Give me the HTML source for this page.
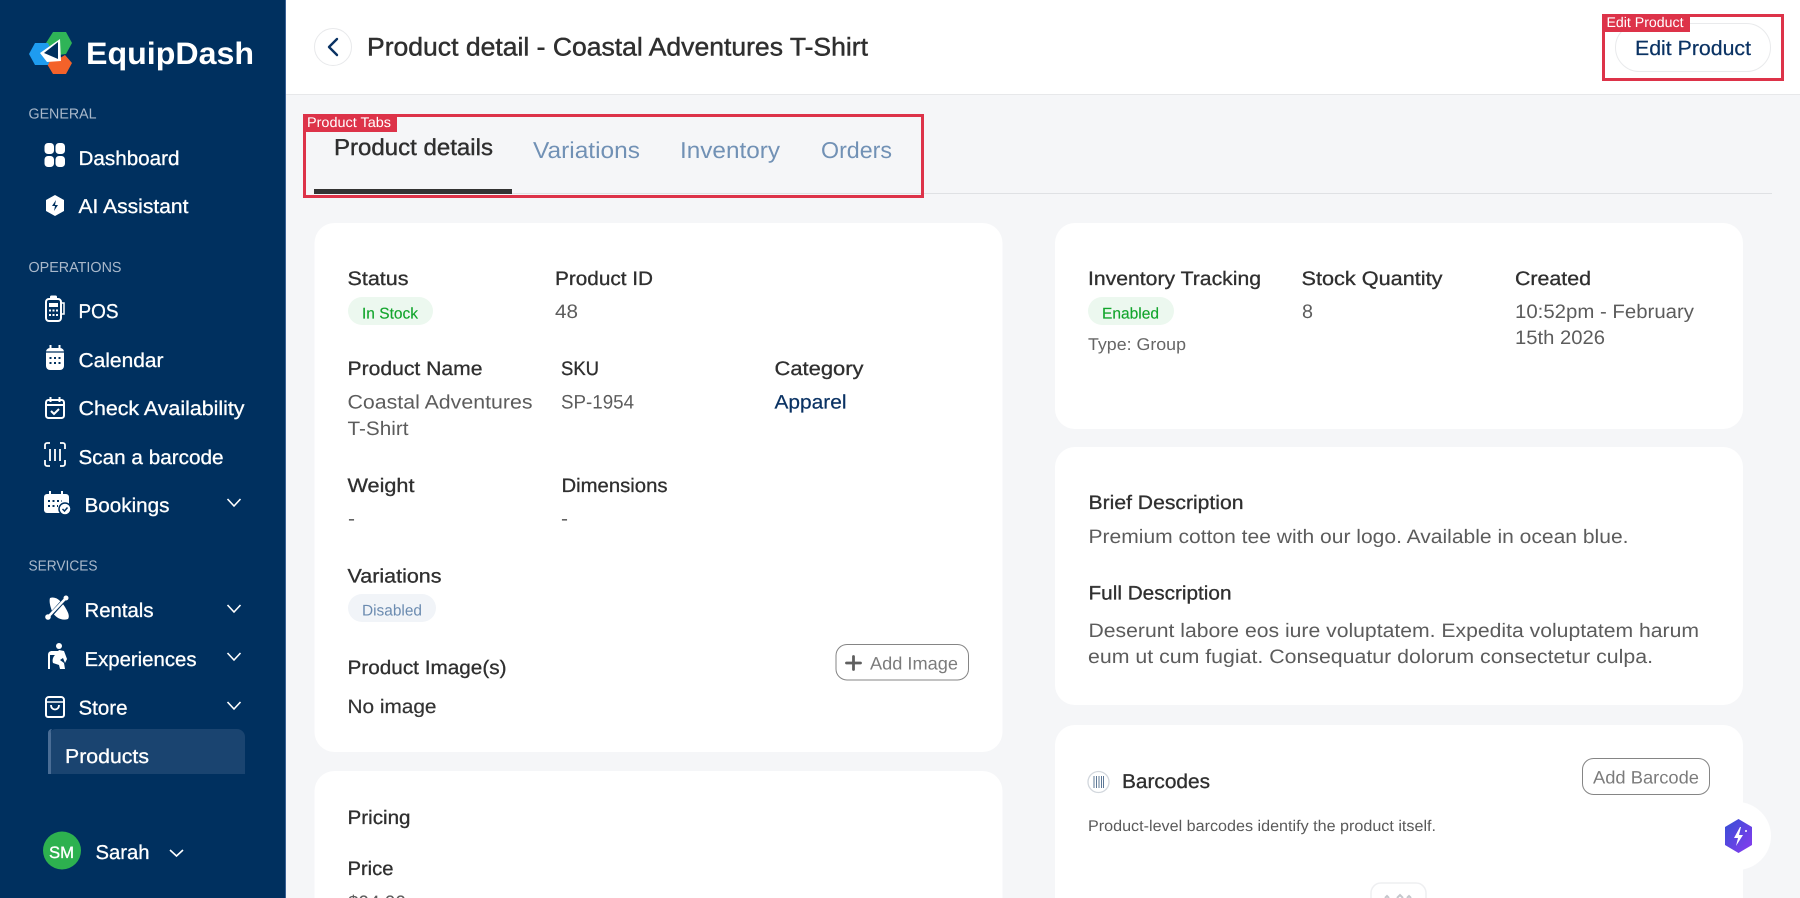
<!DOCTYPE html>
<html lang="en"><head><meta charset="utf-8"><title>Product detail - Coastal Adventures T-Shirt</title>
<style>
html,body{margin:0;padding:0;width:1800px;height:898px;overflow:hidden;background:#f5f6f8}
svg{display:block;position:absolute;left:0;top:0}
text{font-family:"Liberation Sans",Arial,sans-serif;text-rendering:geometricPrecision;white-space:pre}
.nav{font-size:20px;fill:#fff;stroke:#fff;stroke-width:.3}
.sec{font-size:14.5px;fill:#a9b8ca}
.lb{font-size:19.5px;fill:#2f2f2f;stroke:#2f2f2f;stroke-width:.3}
.v{font-size:19.5px;fill:#5c5c5c}
.tab{font-size:23px;fill:#7191b5}
.red{font-size:14px;fill:#fff}
</style></head><body>
<svg width="1800" height="898" viewBox="0 0 1800 898" xmlns="http://www.w3.org/2000/svg">
<defs><linearGradient id="g" x1="0" y1="0" x2="1" y2="1"><stop offset="0" stop-color="#3450d4"/><stop offset="1" stop-color="#8a3af0"/></linearGradient><clipPath id="frame"><rect width="1800" height="898"/></clipPath></defs>
<g clip-path="url(#frame)">
<rect width="1800" height="898" fill="#f5f6f8"/>
<!-- header -->
<rect x="285" y="0" width="1515" height="94" fill="#fff"/>
<rect x="285" y="94" width="1515" height="1" fill="#e7e8ea"/>
<circle cx="333" cy="47" r="18.5" fill="#fff" stroke="#e8e9eb"/>
<path d="M337 39l-8 8 8 8" fill="none" stroke="#0a3263" stroke-width="2.400" stroke-linecap="round" stroke-linejoin="round"/>
<text x="367" y="55.5" font-size="25.5" fill="#2f2f2f" stroke="#2f2f2f" stroke-width=".45" textLength="501" lengthAdjust="spacingAndGlyphs">Product detail - Coastal Adventures T-Shirt</text>
<!-- edit product -->
<rect x="1615.5" y="23.5" width="155" height="48" rx="24" fill="#fff" stroke="#e9eaec"/>
<text x="1635" y="55" font-size="20.5" fill="#0a3263" stroke="#0a3263" stroke-width=".2" textLength="116" lengthAdjust="spacingAndGlyphs">Edit Product</text>
<rect x="1603.5" y="15.5" width="179" height="64" fill="none" stroke="#dd3349" stroke-width="3"/>
<rect x="1602" y="14" width="88" height="18" fill="#dd3349"/>
<text class="red" x="1606.500" y="27" textLength="77" lengthAdjust="spacingAndGlyphs">Edit Product</text>
<!-- tabs -->
<rect x="924" y="193" width="848" height="1" fill="#dfe1e4"/>
<rect x="314" y="193" width="610" height="1" fill="#dfe1e4"/>
<text x="334" y="155" font-size="23" fill="#2f2f2f" stroke="#2f2f2f" stroke-width=".4" textLength="159" lengthAdjust="spacingAndGlyphs">Product details</text>
<text class="tab" x="533" y="158" textLength="107" lengthAdjust="spacingAndGlyphs">Variations</text>
<text class="tab" x="680" y="158" textLength="100" lengthAdjust="spacingAndGlyphs">Inventory</text>
<text class="tab" x="821" y="158" textLength="71" lengthAdjust="spacingAndGlyphs">Orders</text>
<rect x="314" y="189" width="198" height="5" fill="#333"/>
<rect x="304.5" y="115.5" width="618" height="81" fill="none" stroke="#dd3349" stroke-width="3"/>
<rect x="303" y="114" width="94" height="18" fill="#dd3349"/>
<text class="red" x="307" y="127" textLength="84" lengthAdjust="spacingAndGlyphs">Product Tabs</text>
<!-- left card 1 -->
<rect x="314.5" y="223" width="688" height="529" rx="20" fill="#fff"/>
<text class="lb" x="347.500" y="285" textLength="61" lengthAdjust="spacingAndGlyphs">Status</text>
<text class="lb" x="555" y="285" textLength="98" lengthAdjust="spacingAndGlyphs">Product ID</text>
<rect x="348" y="297" width="85" height="28" rx="14" fill="#ecf8ef"/>
<text x="362" y="318.5" font-size="15.5" fill="#12a52c" stroke="#12a52c" stroke-width=".15" textLength="56" lengthAdjust="spacingAndGlyphs">In Stock</text>
<text class="v" x="555" y="318" textLength="23" lengthAdjust="spacingAndGlyphs">48</text>
<text class="lb" x="347.500" y="375" textLength="135" lengthAdjust="spacingAndGlyphs">Product Name</text>
<text class="lb" x="561" y="375" textLength="38" lengthAdjust="spacingAndGlyphs">SKU</text>
<text class="lb" x="774.500" y="375" textLength="89" lengthAdjust="spacingAndGlyphs">Category</text>
<text class="v" x="347.500" y="408.500" textLength="185" lengthAdjust="spacingAndGlyphs">Coastal Adventures</text>
<text class="v" x="347.500" y="435" textLength="61" lengthAdjust="spacingAndGlyphs">T-Shirt</text>
<text class="v" x="561" y="408.500" textLength="73" lengthAdjust="spacingAndGlyphs">SP-1954</text>
<text x="774.500" y="408.500" font-size="19.5" fill="#0a3263" stroke="#0a3263" stroke-width=".2" textLength="72" lengthAdjust="spacingAndGlyphs">Apparel</text>
<text class="lb" x="347.500" y="492" textLength="67" lengthAdjust="spacingAndGlyphs">Weight</text>
<text class="lb" x="561.500" y="492" textLength="106" lengthAdjust="spacingAndGlyphs">Dimensions</text>
<text class="v" x="348" y="525" textLength="7" lengthAdjust="spacingAndGlyphs">-</text>
<text class="v" x="561" y="525" textLength="7" lengthAdjust="spacingAndGlyphs">-</text>
<text class="lb" x="347.500" y="582.500" textLength="94" lengthAdjust="spacingAndGlyphs">Variations</text>
<rect x="348" y="594" width="88" height="28" rx="14" fill="#f1f4f8"/>
<text x="362" y="615.5" font-size="15.5" fill="#6b8bb0" textLength="60" lengthAdjust="spacingAndGlyphs">Disabled</text>
<text class="lb" x="347.500" y="674" textLength="159" lengthAdjust="spacingAndGlyphs">Product Image(s)</text>
<rect x="836" y="644.500" width="132.500" height="35.500" rx="11" fill="#fff" stroke="#858585"/>
<path d="M853.500 656.500v13M846.500 663h14" stroke="#5f5f5f" stroke-width="2.800" stroke-linecap="round"/>
<text x="870" y="669.500" font-size="18" fill="#7b7b7b" textLength="88" lengthAdjust="spacingAndGlyphs">Add Image</text>
<text x="347.500" y="713" font-size="19.5" fill="#333" stroke="#333" stroke-width=".2" textLength="89" lengthAdjust="spacingAndGlyphs">No image</text>
<!-- left card 2 -->
<path d="M314.500 898V791a20 20 0 0 1 20-20h648a20 20 0 0 1 20 20v107z" fill="#fff"/>
<text class="lb" x="347.500" y="824" textLength="63" lengthAdjust="spacingAndGlyphs">Pricing</text>
<text class="lb" x="347.500" y="875" textLength="46" lengthAdjust="spacingAndGlyphs">Price</text>
<text class="v" x="348" y="909" textLength="58" lengthAdjust="spacingAndGlyphs">$94.99</text>
<!-- right card A -->
<rect x="1055" y="223" width="688" height="206" rx="20" fill="#fff"/>
<text class="lb" x="1088" y="285" textLength="173" lengthAdjust="spacingAndGlyphs">Inventory Tracking</text>
<text class="lb" x="1301.500" y="285" textLength="141" lengthAdjust="spacingAndGlyphs">Stock Quantity</text>
<text class="lb" x="1515" y="285" textLength="76" lengthAdjust="spacingAndGlyphs">Created</text>
<rect x="1088" y="297" width="86" height="28" rx="14" fill="#ecf8ef"/>
<text x="1102" y="318.500" font-size="15.5" fill="#12a52c" stroke="#12a52c" stroke-width=".15" textLength="57" lengthAdjust="spacingAndGlyphs">Enabled</text>
<text class="v" x="1302" y="318" textLength="11" lengthAdjust="spacingAndGlyphs">8</text>
<text class="v" x="1515" y="318" textLength="179" lengthAdjust="spacingAndGlyphs">10:52pm - February</text>
<text class="v" x="1515" y="344" textLength="90" lengthAdjust="spacingAndGlyphs">15th 2026</text>
<text x="1088" y="350" font-size="17" fill="#666" textLength="98" lengthAdjust="spacingAndGlyphs">Type: Group</text>
<!-- right card B -->
<rect x="1055" y="447" width="688" height="258" rx="20" fill="#fff"/>
<text class="lb" x="1088.500" y="509" textLength="155" lengthAdjust="spacingAndGlyphs">Brief Description</text>
<text class="v" x="1088.500" y="543" textLength="540" lengthAdjust="spacingAndGlyphs">Premium cotton tee with our logo. Available in ocean blue.</text>
<text class="lb" x="1088.500" y="599.500" textLength="143" lengthAdjust="spacingAndGlyphs">Full Description</text>
<text class="v" x="1088.500" y="637" textLength="610.500" lengthAdjust="spacingAndGlyphs">Deserunt labore eos iure voluptatem. Expedita voluptatem harum</text>
<text class="v" x="1088" y="663" textLength="565" lengthAdjust="spacingAndGlyphs">eum ut cum fugiat. Consequatur dolorum consectetur culpa.</text>
<!-- right card C -->
<path d="M1055 898V745a20 20 0 0 1 20-20h648a20 20 0 0 1 20 20v153z" fill="#fff"/>
<circle cx="1098.500" cy="782" r="10.500" fill="#fff" stroke="#d2d7dd" stroke-width="1.300"/>
<path d="M1094 776v12M1096.500 776v12M1099 776v12M1101.500 776v12M1103.500 776v12" stroke="#5d7896" stroke-width="1"/>
<text x="1122" y="788" font-size="20" fill="#2f2f2f" stroke="#2f2f2f" stroke-width=".3" textLength="88" lengthAdjust="spacingAndGlyphs">Barcodes</text>
<rect x="1582.500" y="758.500" width="127" height="36" rx="11" fill="#fff" stroke="#858585"/>
<text x="1593" y="783.500" font-size="18" fill="#7b7b7b" textLength="106" lengthAdjust="spacingAndGlyphs">Add Barcode</text>
<text x="1088" y="831" font-size="15.500" fill="#5a5a5a" textLength="348" lengthAdjust="spacingAndGlyphs">Product-level barcodes identify the product itself.</text>
<path d="M1371 898v-5a10 10 0 0 1 10-10h35a10 10 0 0 1 10 10v5" fill="#fff" stroke="#eeeff1" stroke-width="1.500"/>
<path d="M1385 898l2-2 2 2M1397 898l3-3 3 3M1407 898l2-2 2 2" fill="none" stroke="#c4c7cc" stroke-width="2"/>
<!-- floating -->
<circle cx="1737" cy="836" r="34" fill="#fff"/>
<path d="M1738.500 819l13.500 8v18l-13.500 8-13.500-8v-18z" fill="url(#g)"/>
<path d="M1740 827l-6 11h4l-2 8 7-11h-4l2-8z" fill="#fff"/>
<circle cx="1746" cy="831" r="1" fill="#fff"/>
<!-- sidebar -->
<rect x="0" y="0" width="285" height="898" fill="#00305f"/>
<rect x="285" y="0" width="1" height="898" fill="#3a6194"/>
<!-- logo -->
<path d="M53 32h13l6 11-6 11-7 1-13-12z" fill="#2fb457"/>
<path d="M47 60l13-2 5-3 7 8-6 11H53l-6-10z" fill="#f4622a"/>
<path d="M35 43h13l5 11-5 11H35l-6-11z" fill="#1e9cf0"/>
<path d="M60 39L40 53l7 9 14-1z" fill="#fff"/>
<path d="M58 42L44 53l14 6z" fill="#00305f"/>
<text x="86" y="64" font-size="31" font-weight="700" fill="#fff" textLength="168" lengthAdjust="spacingAndGlyphs">EquipDash</text>
<text class="sec" x="28.500" y="118.500" textLength="68" lengthAdjust="spacingAndGlyphs">GENERAL</text>
<g fill="#fff"><rect x="44.500" y="143" width="9.500" height="11" rx="3.500"/><rect x="55.500" y="143" width="9.500" height="11" rx="3.500"/><rect x="44.500" y="156" width="9.500" height="11" rx="3.500"/><rect x="55.500" y="156" width="9.500" height="11" rx="3.500"/></g>
<text class="nav" x="78.500" y="165" textLength="101" lengthAdjust="spacingAndGlyphs">Dashboard</text>
<path d="M55 195l9 5v11l-9 5-9-5v-11z" fill="#fff"/><path d="M56 200l-4 6h3l-1 5 4-6h-3z" fill="#00305f"/>
<text class="nav" x="78.500" y="213" textLength="110" lengthAdjust="spacingAndGlyphs">AI Assistant</text>
<text class="sec" x="28.500" y="272" textLength="93" lengthAdjust="spacingAndGlyphs">OPERATIONS</text>
<!-- POS -->
<rect x="46" y="299" width="15" height="22" rx="3" fill="none" stroke="#fff" stroke-width="2"/><rect x="50" y="295.500" width="7" height="4" rx="1.500" fill="#fff"/><path d="M62 303h2v11h-2" fill="none" stroke="#fff" stroke-width="1.500"/><rect x="49" y="303" width="9" height="4" fill="#fff"/><path d="M49 310.500h9M49 315h9" stroke="#fff" stroke-width="2" stroke-dasharray="2 1.500"/>
<text class="nav" x="78.500" y="318" textLength="40" lengthAdjust="spacingAndGlyphs">POS</text>
<!-- calendar -->
<rect x="46" y="348" width="18" height="22" rx="4" fill="#fff"/><path d="M50.500 345v5M59.500 345v5" stroke="#fff" stroke-width="2"/><path d="M46 352h18" stroke="#00305f" stroke-width="1.200"/><path d="M49.500 358h11M49.500 363h11" stroke="#00305f" stroke-width="2" stroke-dasharray="2 2.500"/>
<text class="nav" x="78.500" y="367" textLength="85" lengthAdjust="spacingAndGlyphs">Calendar</text>
<!-- check -->
<rect x="46" y="400" width="18" height="18" rx="2.500" fill="none" stroke="#fff" stroke-width="2"/><path d="M46 405h18M50.500 397v5M59.500 397v5" stroke="#fff" stroke-width="2"/><path d="M51 411l3 3 5-5" fill="none" stroke="#fff" stroke-width="2"/>
<text class="nav" x="78.500" y="415" textLength="166" lengthAdjust="spacingAndGlyphs">Check Availability</text>
<!-- scan -->
<path d="M50 443h-3a2 2 0 0 0-2 2v4M60 443h3a2 2 0 0 1 2 2v4M50 466h-3a2 2 0 0 1-2-2v-4M60 466h3a2 2 0 0 0 2-2v-4M50 449v12M55 449v12M60 449v12" fill="none" stroke="#fff" stroke-width="1.800"/>
<text class="nav" x="78.500" y="464" textLength="145" lengthAdjust="spacingAndGlyphs">Scan a barcode</text>
<!-- bookings -->
<rect x="44" y="494" width="25" height="19" rx="3" fill="#fff"/><path d="M50 491v5M62 491v5" stroke="#fff" stroke-width="2"/><path d="M48 501h14M48 506h10" stroke="#00305f" stroke-width="2" stroke-dasharray="2 2.500"/><circle cx="65" cy="509" r="6" fill="#fff" stroke="#00305f" stroke-width="1.500"/><path d="M62.500 509l2 2 3-3.500" fill="none" stroke="#00305f" stroke-width="1.500"/>
<text class="nav" x="84.500" y="512" textLength="85" lengthAdjust="spacingAndGlyphs">Bookings</text>
<g fill="none" stroke="#fff" stroke-width="1.600"><path d="M227.500 499l6.500 7 6.500-7"/><path d="M227.500 605l6.500 7 6.500-7"/><path d="M227.500 653l6.500 7 6.500-7"/><path d="M227.500 702l6.500 7 6.500-7"/><path d="M170 850l6.500 6 6.500-6"/></g>
<text class="sec" x="28.500" y="570.500" textLength="69" lengthAdjust="spacingAndGlyphs">SERVICES</text>
<!-- rentals -->
<path d="M50 598c6-2 11 3 15 9 3 5 5 9 3 12-6 2-13-1-16-8-2-5-3-10-2-13z" fill="#fff"/><path d="M66 598L48 618" stroke="#00305f" stroke-width="4"/><path d="M66 598L49 616" stroke="#fff" stroke-width="2.500"/><circle cx="48" cy="617" r="2.800" fill="#fff"/><circle cx="66" cy="598" r="2.500" fill="#fff"/>
<text class="nav" x="84.500" y="617" textLength="69" lengthAdjust="spacingAndGlyphs">Rentals</text>
<!-- experiences -->
<circle cx="59" cy="646" r="3" fill="#fff"/><path d="M48 669v-14c0-3 2-4 4-4h7l-3 4h-6v14z" fill="#fff"/><path d="M59 650l5 1 3 8-2 4-2-5-3 2 4 3 1 6h-5l-1-4-6-2c-1-3 0-6 2-8z" fill="#fff"/>
<text class="nav" x="84.500" y="666" textLength="112" lengthAdjust="spacingAndGlyphs">Experiences</text>
<!-- store -->
<path d="M49 697h12a3 3 0 0 1 3 3v15a2 2 0 0 1-2 2H48a2 2 0 0 1-2-2v-15a3 3 0 0 1 3-3z" fill="none" stroke="#fff" stroke-width="2"/><path d="M46 702h18" stroke="#fff" stroke-width="1.500"/><path d="M51 705c0 6 8 6 8 0" fill="none" stroke="#fff" stroke-width="1.800"/>
<text class="nav" x="78.500" y="714.500" textLength="49" lengthAdjust="spacingAndGlyphs">Store</text>
<path d="M48 774v-37a8 8 0 0 1 8-8h181a8 8 0 0 1 8 8v37z" fill="#1a4470"/>
<path d="M52 729a4 4 0 0 0-4 4v41h3v-41a4 4 0 0 1 1-4z" fill="#4a6d95"/>
<text class="nav" x="65" y="763" textLength="84" lengthAdjust="spacingAndGlyphs">Products</text>
<circle cx="62" cy="850.500" r="19" fill="#2db14f"/>
<text x="49" y="858" font-size="16.500" fill="#fff" stroke="#fff" stroke-width=".35" textLength="25" lengthAdjust="spacingAndGlyphs">SM</text>
<text class="nav" x="95.500" y="859" textLength="54" lengthAdjust="spacingAndGlyphs">Sarah</text>
</g>
</svg>
</body></html>
